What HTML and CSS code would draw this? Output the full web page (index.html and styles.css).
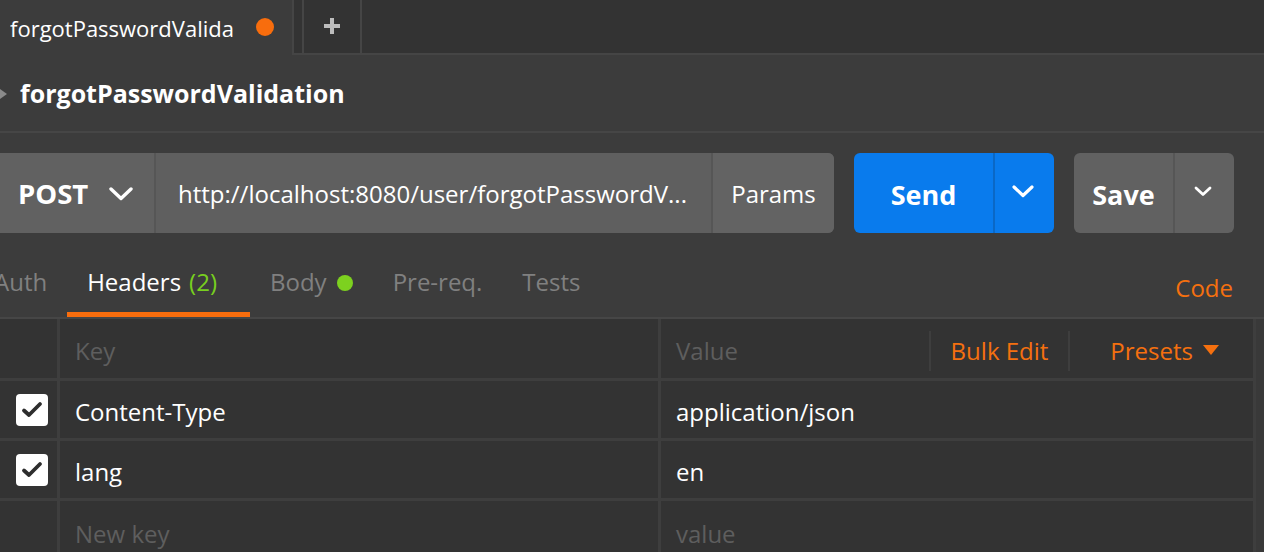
FILE: index.html
```html
<!DOCTYPE html>
<html lang="en">
<head>
<meta charset="utf-8">
<title>forgotPasswordValidation</title>
<link rel="stylesheet" href="styles.css">
</head>
<body>
<div class="tabbar">
  <div class="tab tab-active">
    <span class="tab-name">forgotPasswordValida</span>
    <span class="tab-dot"></span>
  </div>
  <div class="tab-gap"></div>
  <div class="tab tab-add">
    <svg width="16" height="16" viewBox="0 0 16 16"><path d="M6 0h4v6h6v4h-6v6h-4v-6h-6v-4h6z" fill="#bdbdbd"/></svg>
  </div>
  <div class="tab-fill"></div>
</div>

<div class="titlebar">
  <svg class="caret" width="8" height="12" viewBox="0 0 8 12"><polygon points="0,1 7,6 0,11" fill="#8a8a8a"/></svg>
  <h1 class="title">forgotPasswordValidation</h1>
</div>

<div class="request">
  <div class="urlbar">
    <div class="method">
      <span>POST</span>
      <svg width="24" height="14" viewBox="0 0 24 14"><polyline points="2,2 12,11.5 22,2" fill="none" stroke="#fff" stroke-width="3.4" stroke-linecap="round" stroke-linejoin="round"/></svg>
    </div>
    <div class="url">http://localhost:8080/user/forgotPasswordV...</div>
    <div class="params">Params</div>
  </div>
  <div class="btn btn-send">
    <span class="btn-label">Send</span>
    <span class="btn-drop"><svg width="22" height="13" viewBox="0 0 22 13"><polyline points="2,2 11,10.5 20,2" fill="none" stroke="#fff" stroke-width="3.2" stroke-linecap="round" stroke-linejoin="round"/></svg></span>
  </div>
  <div class="btn btn-save">
    <span class="btn-label">Save</span>
    <span class="btn-drop"><svg width="18" height="11" viewBox="0 0 18 11"><polyline points="2,2 9,8.5 16,2" fill="none" stroke="#fff" stroke-width="2.8" stroke-linecap="round" stroke-linejoin="round"/></svg></span>
  </div>
</div>

<div class="subtabs">
  <div class="subtab-list">
    <div class="subtab">Auth</div>
    <div class="subtab subtab-active">Headers <span class="count">(2)</span></div>
    <div class="subtab">Body <span class="body-dot"></span></div>
    <div class="subtab">Pre-req.</div>
    <div class="subtab">Tests</div>
  </div>
  <div class="code-link">Code</div>
</div>

<div class="table-wrap">
  <div class="kv-table">
    <div class="kv-row kv-head">
      <div class="cell cell-check"></div>
      <div class="cell cell-key muted">Key</div>
      <div class="cell cell-value">
        <span class="muted value-label">Value</span>
        <span class="head-sep"></span>
        <span class="head-action bulk">Bulk Edit</span>
        <span class="head-sep"></span>
        <span class="head-action presets">Presets <svg width="16" height="11" viewBox="0 0 16 11"><polygon points="0,0 16,0 8,10" fill="#f5700f"/></svg></span>
      </div>
    </div>
    <div class="kv-row">
      <div class="cell cell-check"><span class="checkbox"><svg width="32" height="32" viewBox="0 0 32 32"><polyline points="8,16.5 13,21 24,10" fill="none" stroke="#2e2e2e" stroke-width="3.8" stroke-linecap="round" stroke-linejoin="round"/></svg></span></div>
      <div class="cell cell-key">Content-Type</div>
      <div class="cell cell-value">application/json</div>
    </div>
    <div class="kv-row">
      <div class="cell cell-check"><span class="checkbox"><svg width="32" height="32" viewBox="0 0 32 32"><polyline points="8,16.5 13,21 24,10" fill="none" stroke="#2e2e2e" stroke-width="3.8" stroke-linecap="round" stroke-linejoin="round"/></svg></span></div>
      <div class="cell cell-key">lang</div>
      <div class="cell cell-value">en</div>
    </div>
    <div class="kv-row kv-new">
      <div class="cell cell-check"></div>
      <div class="cell cell-key muted">New key</div>
      <div class="cell cell-value muted">value</div>
    </div>
  </div>
</div>
</body>
</html>
```

FILE: styles.css
```css
* { box-sizing: border-box; }

html, body {
  margin: 0;
  padding: 0;
  height: 552px;
  overflow: hidden;
}

body {
  background: #3c3c3c;
  color: #ffffff;
  font-family: "Open Sans", "Noto Sans", "Liberation Sans", sans-serif;
}

/* ---------- top tab bar ---------- */
.tabbar {
  display: flex;
  height: 55px;
  background: #333333;
}

.tab {
  display: flex;
  align-items: center;
  height: 55px;
}

.tab-active {
  width: 294px;
  padding-left: 10px;
  background: #3c3c3c;
  border-right: 2px solid #454545;
}

.tab-name {
  font-size: 22px;
  color: #ffffff;
  width: 226px;
  white-space: nowrap;
  overflow: hidden;
}

.tab-dot {
  width: 18px;
  height: 18px;
  border-radius: 50%;
  background: #f86d0d;
  margin-left: 20px;
  margin-top: -2px;
}

.tab-gap {
  width: 8px;
  border-bottom: 2px solid #454545;
}

.tab-add {
  width: 60px;
  justify-content: center;
  border-left: 2px solid #454545;
  border-right: 2px solid #454545;
  border-bottom: 2px solid #454545;
  padding-bottom: 2px;
}

.tab-fill {
  flex: 1;
  border-bottom: 2px solid #454545;
}

/* ---------- title ---------- */
.titlebar {
  display: flex;
  align-items: center;
  height: 78px;
  border-bottom: 2px solid #464646;
}

.caret {
  margin-right: 12px;
  margin-top: 2px;
}

.title {
  margin: 0;
  font-size: 25px;
  font-weight: 700;
  color: #ffffff;
}

/* ---------- request bar ---------- */
.request {
  display: flex;
  align-items: stretch;
  height: 80px;
  margin-top: 20px;
  padding-right: 30px;
}

.urlbar {
  display: flex;
  width: 834px;
  background: #5f5f5f;
  border-radius: 0 6px 6px 0;
  overflow: hidden;
}

.method {
  display: flex;
  align-items: center;
  width: 156px;
  padding-left: 18px;
  background: #616161;
  font-size: 27.5px;
  font-weight: 700;
  border-right: 2px solid #565656;
}

.method svg {
  margin-left: 21px;
  margin-top: 2px;
}

.url {
  flex: 1;
  display: flex;
  align-items: center;
  padding-left: 22px;
  font-size: 24px;
  white-space: nowrap;
  overflow: hidden;
  border-right: 2px solid #565656;
}

.params {
  display: flex;
  align-items: center;
  justify-content: center;
  width: 121px;
  font-size: 24px;
  background: #636363;
}

.btn {
  display: flex;
  border-radius: 6px;
  overflow: hidden;
  font-size: 27px;
  font-weight: 700;
}

.btn-send {
  width: 200px;
  margin-left: 20px;
  background: #097bed;
}

.btn-save {
  width: 160px;
  margin-left: 20px;
  background: #616161;
}

.btn-label {
  flex: 1;
  display: flex;
  align-items: center;
  justify-content: center;
  padding-top: 2px;
}

.btn-drop {
  display: flex;
  align-items: center;
  justify-content: center;
  padding-bottom: 4px;
  padding-right: 4px;
}

.btn-send .btn-drop {
  width: 61px;
  border-left: 2px solid #0a68c6;
}

.btn-save .btn-drop {
  width: 61px;
  border-left: 2px solid #565656;
}

/* ---------- sub tabs ---------- */
.subtabs {
  display: flex;
  align-items: stretch;
  justify-content: space-between;
  height: 86px;
  border-bottom: 2px solid #464646;
}

.subtab-list {
  display: flex;
  margin-left: -26px;
}

.subtab {
  display: flex;
  align-items: center;
  padding: 18px 20px 0;
  font-size: 24px;
  color: #808080;
  border-bottom: 5px solid transparent;
}

.subtab-active {
  color: #ffffff;
  border-bottom-color: #f86d0d;
  padding-right: 33px;
}

.count {
  color: #78cf1f;
  margin-left: 8px;
}

.body-dot {
  width: 16px;
  height: 16px;
  border-radius: 50%;
  background: #7dd11f;
  margin-left: 10px;
  margin-top: 2px;
}

.code-link {
  display: flex;
  align-items: center;
  padding: 24px 31px 0 0;
  font-size: 24px;
  color: #f5700f;
}

/* ---------- key / value table ---------- */
.table-wrap {
  background: #393939;
}

.kv-table {
  width: 1256px;
  background: #333333;
  border-right: 3px solid #3e3e3e;
}

.kv-row {
  display: flex;
  height: 60px;
  border-bottom: 3px solid #3e3e3e;
  font-size: 24px;
}

.kv-head {
  height: 62px;
}

.kv-new {
  border-bottom: none;
}

.cell {
  display: flex;
  align-items: center;
}

.cell-key,
.cell-value {
  padding-top: 4px;
}

.cell-check {
  width: 60px;
  padding-left: 16px;
  border-right: 3px solid #3e3e3e;
}

.cell-key {
  width: 601px;
  padding-left: 15px;
  border-right: 3px solid #3e3e3e;
}

.cell-value {
  flex: 1;
  padding-left: 15px;
}

.muted {
  color: #5e5e5e;
}

.value-label {
  flex: 1;
  color: #5e5e5e;
}

.head-sep {
  width: 2px;
  height: 40px;
  background: #3e3e3e;
}

.head-action {
  color: #f5700f;
  display: flex;
  align-items: center;
}

.bulk {
  padding: 0 20px;
}

.presets {
  padding: 0 34px 0 40px;
}

.presets svg {
  margin-left: 10px;
}

.checkbox {
  width: 32px;
  height: 32px;
  border-radius: 4px;
  background: #ffffff;
  display: block;
}

.checkbox svg {
  display: block;
}
```
